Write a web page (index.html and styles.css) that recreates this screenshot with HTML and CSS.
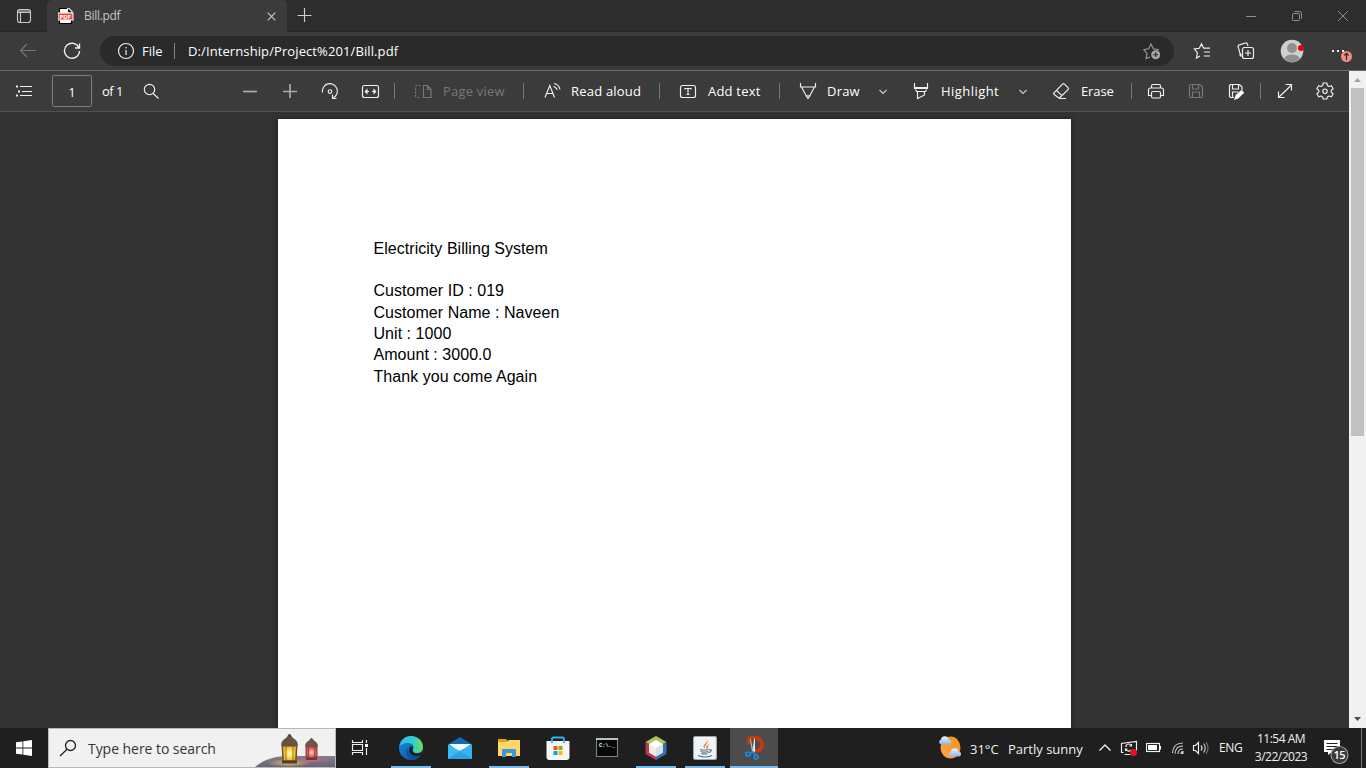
FILE: index.html
```html
<!DOCTYPE html>
<html lang="en">
<head>
<meta charset="utf-8">
<title>Bill.pdf</title>
<link rel="stylesheet" href="styles.css">
</head>
<body>
<div class="titlebar">
  <div class="workspace"><svg class="ic16 grey" viewBox="0 0 16 16"><rect x="1.5" y="1.5" width="13" height="13" rx="2.5"/><path d="M1.5 3h13M1.5 4.5h13M4.5 5v9"/></svg></div>
  <div class="tab">
    <svg class="pdf-icon" viewBox="0 0 16 16"><path d="M1.500.5h8.500l3.500 3.500v11.500h-12z" fill="#fff" stroke="#000"/><path d="M9.500 0h1l3.500 3.500v1.500h-4.500z" fill="#000"/><rect y="5" width="15" height="7" fill="#f44343"/><text x="1.500" y="10.600" textLength="11.500" lengthAdjust="spacingAndGlyphs">PDF</text></svg>
    <span class="tab-title">Bill.pdf</span>
    <svg class="tab-close" viewBox="0 0 9 9"><path d="M.7.7l7.6 7.6M8.3.7L.7 8.3"/></svg>
  </div>
  <svg class="newtab" viewBox="0 0 16 16"><path d="M7.500 1v14M.5 8.500h14"/></svg>
  <div class="window-controls">
    <span><svg class="ic12" viewBox="0 0 12 12"><path d="M1 6.500h10"/></svg></span>
    <span><svg class="ic12" viewBox="0 0 12 12"><rect x="1.500" y="3.500" width="7" height="7" rx="1"/><path d="M3.500 1.500h5a2 2 0 0 1 2 2v5"/></svg></span>
    <span><svg class="ic12" viewBox="0 0 12 12"><path d="M1 1l10 10M11 1L1 11"/></svg></span>
  </div>
</div>

<div class="navbar">
  <div class="nav-cell dim"><svg class="ic18" viewBox="0 0 18 18"><path d="M17 8.500H1.500M8 2L1.500 8.500 8 15"/></svg></div>
  <div class="nav-cell"><svg class="ic18 bold" viewBox="0 0 18 18"><path d="M16 6A7.500 7.500 0 1 0 16.500 9M16.500 1.500V6h-4.500"/></svg></div>
  <div class="address">
    <svg class="ic18" viewBox="0 0 18 18"><circle cx="9" cy="9" r="7.500"/><path d="M9 8v5M9 5v1.400"/></svg>
    <span class="scheme">File</span>
    <i class="rule"></i>
    <span class="url">D:/Internship/Project%201/Bill.pdf</span>
    <svg class="star" viewBox="0 0 18 18"><path d="M7 15L3 16.500l1-5.200L.8 7.600l4.900-.8L8 2l2.300 4.800 4.900.8-1 1"/><circle cx="12.700" cy="12.700" r="4.500" class="plus-dot"/><path class="plus-mark" d="M12.700 10.300v4.800M10.300 12.700h4.800"/></svg>
  </div>
  <svg class="fav" viewBox="0 0 18 18"><path d="M6.800 14L3.500 16l.9-5.400L1.300 7l5-.8L8.500 1.800l2.100 4.300h6.400M11 10h6M11 14h6"/></svg>
  <svg class="collect" viewBox="0 0 18 18"><path d="M4.500 13L3 11.500 1.200 5c-.3-1 .1-1.800 1.100-2.100L8.500 1c1-.3 1.700.2 2 1.100L11 4M2.500 12.500l2 2"/><rect x="5.500" y="5.500" width="11" height="11" rx="2"/><path d="M11 8v6M8 11h6"/></svg>
  <svg class="avatar" viewBox="0 0 24 24"><circle cx="12" cy="12" r="11.300" fill="#d2d0ce"/><circle cx="12" cy="9" r="5" fill="#929090"/><path d="M4 20c1-6 15-6 16 0a11 11 0 0 1-16 0z" fill="#929090"/><circle cx="21" cy="9" r="3" fill="#e60000"/></svg>
  <svg class="more" viewBox="0 0 24 24"><path d="M3 11h2v2H3zM8 11h2v2H8zM13 11h2v2h-2z" fill="#eee" stroke="none"/><circle cx="17.500" cy="17.500" r="5.500" fill="#f28b82" stroke="none"/><path d="M17.500 21v-6.500M15.300 16.500l2.200-2.200 2.200 2.200" stroke="#282828"/></svg>
</div>

<div class="viewer">
  <main class="viewport">
    <div class="toolbar">
      <svg viewBox="0 0 24 24"><path d="M8 7.500h12M10 12.500h10M8 16.500h12"/><path d="M4 7.500h2M6 12.500h2M4 16.500h2" stroke-width="2"/></svg>
      <span class="page-no">1</span>
      <span class="of">of 1</span>
      <svg viewBox="0 0 24 24"><circle cx="10.500" cy="10.500" r="5.200"/><path d="M14.200 14.500l5.300 5"/></svg>
      <i></i>
      <svg class="thick" viewBox="0 0 24 24"><path d="M5 12.500h14"/></svg><i></i>
      <svg class="thick" viewBox="0 0 24 24"><path d="M5 12.500h14M12 5v14"/></svg><i></i>
      <svg viewBox="0 0 24 24"><path d="M4.500 13.500a7.500 7.500 0 1 1 10.800 5.300M14.500 15.500v4h4"/><circle cx="12" cy="12.500" r="1.800"/></svg><i></i>
      <svg viewBox="0 0 24 24"><rect x="4.500" y="6.500" width="16" height="12" rx="2"/><path d="M7 12.500h4M14 12.500h4"/><path d="M6.500 12.500l3-3v6zM18.500 12.500l-3-3v6z" fill="#fff" stroke="none"/></svg><i></i>
      <b></b><i></i>
      <svg class="off" viewBox="0 0 24 24"><path stroke-dasharray="2 1.300" d="M9.500 6.500H6.500a2 2 0 0 0-2 2v8a2 2 0 0 0 2 2h3"/><path d="M12.500 6.500h4l3.500 4v8h-7.500zM16.500 6.500v4h4"/></svg><i></i>
      <span class="off-text">Page view</span>
      <b></b><i></i>
      <svg viewBox="0 0 24 24"><path d="M5 18.500L9.800 6.500l4.700 12M6.500 14.500h6.500M14 4.500q5 1 6 6M13.500 7.500q3 .8 3.500 3.500"/></svg><i></i>
      <span>Read aloud</span>
      <b></b><i></i>
      <svg viewBox="0 0 24 24"><rect x="4.500" y="6.500" width="15" height="12" rx="2"/><path d="M9 10.500V9.500h6v1M12 9.500v6M10.500 15.500h3"/></svg><i></i>
      <span>Add text</span>
      <b></b><i></i>
      <svg viewBox="0 0 24 24"><path d="M4.500 4v4h15V4M5.800 8.500l4.700 9 1.500 2 1.500-2 4.700-9M10 16.800h4"/></svg><i></i>
      <span>Draw</span>
      <svg class="chev" viewBox="0 0 16 16"><path d="M4.500 7L8 10.500 11.500 7"/></svg><i></i>
      <svg viewBox="0 0 24 24"><path d="M5.500 4v5.500h13V4M5.500 8.500h13M6.500 10.500l1 2h9l1-2M8.500 13v6.500l7-3.500v-3"/></svg><i></i>
      <span class="highlight">Highlight</span>
      <svg class="chev" viewBox="0 0 16 16"><path d="M4.500 7L8 10.500 11.500 7"/></svg><i></i>
      <svg viewBox="0 0 24 24"><path d="M5 13.800l8.500-8.700q1-1 2 0l3.500 3.500q1 1 0 2L11.500 18q-1.500 1.500-3 0L5 15.300q-.8-.8 0-1.500zM7.500 11.500l5.700 5.300M10 19.500h7"/></svg><i></i>
      <span class="erase">Erase</span>
      <b></b><i></i>
      <svg viewBox="0 0 24 24"><path d="M7.500 9V7q0-1.500 1.500-1.500h6q1.500 0 1.500 1.500v2M7.500 16.500h-3V11q0-2 2-2h11q2 0 2 2v5.500h-3"/><rect x="7.500" y="12.500" width="9" height="6.500" rx="1.500"/></svg><i></i>
      <svg class="off" viewBox="0 0 24 24"><path d="M5.500 7q0-1.500 1.500-1.500h9l2.500 2.500v9q0 1.500-1.500 1.500H7q-1.500 0-1.500-1.500zM8.500 6v4h6V6M8.500 18v-5h7v5"/></svg><i></i>
      <svg viewBox="0 0 24 24"><path d="M10 18.500H6.500l-1-1v-11l1-1h9l2.500 2.500v3M8.500 6v4h6V6M8.500 18v-5h6"/><path d="M11 20l1-3.500 5.500-5 2 2.200-5.500 5.300z" fill="#fff"/></svg><i></i>
      <b></b><i></i>
      <svg viewBox="0 0 24 24"><path d="M5.500 18.500L18.500 6M12.500 5.500h6v6M5.500 12.500v6h6"/></svg><i></i>
      <svg viewBox="0 0 24 24"><path d="M10.200 4h3.600l.6 2.600 1.500.9 2.500-.8 1.700 3-1.900 1.700v1.700l1.900 1.700-1.700 3-2.500-.8-1.500.9-.6 2.100h-3.600l-.6-2.100-1.500-.9-2.500.8-1.700-3 1.900-1.700v-1.700L3.900 9.700l1.700-3 2.500.8 1.500-.9z" stroke-linejoin="round"/><circle cx="12" cy="12.200" r="2.200"/></svg>
    </div>
    <div class="canvas">
      <article class="sheet">
        <p>Electricity Billing System</p>
        <p></p>
        <p>Customer ID : 019</p>
        <p>Customer Name : Naveen</p>
        <p>Unit : 1000</p>
        <p>Amount : 3000.0</p>
        <p>Thank you come Again</p>
      </article>
    </div>
  </main>
  <aside class="scrollbar">
    <svg viewBox="0 0 17 17"><path d="M5 11h7L8.500 7z" fill="#a3a3a3"/></svg>
    <div class="thumb"></div>
    <svg class="down" viewBox="0 0 17 17"><path d="M5 6h7l-3.500 4z" fill="#505050"/></svg>
  </aside>
</div>

<footer class="taskbar">
  <div class="start"><svg viewBox="0 0 16 16"><path d="M0 2.300L6.500 1.400v6.100H0zM7.300 1.300L16 0v7.500H7.300zM0 8.400h6.500v6.200L0 13.700zM7.300 8.400H16V16l-8.700-1.300z"/></svg></div>
  <div class="search">
    <svg class="magnifier" viewBox="0 0 18 18"><circle cx="11.500" cy="6.500" r="5"/><path d="M8 10.300L1 17"/></svg>
    <span>Type here to search</span>
    <svg class="lanterns" viewBox="0 0 80 38">
      <defs><radialGradient id="gold"><stop offset="0" stop-color="#fffbd8"/><stop offset=".5" stop-color="#ffe45c"/><stop offset="1" stop-color="#eeb022"/></radialGradient><radialGradient id="rose"><stop offset="0" stop-color="#ffe8b8"/><stop offset=".5" stop-color="#f58474"/><stop offset="1" stop-color="#c84850"/></radialGradient><linearGradient id="hill" x2="0" y2="1"><stop offset="0" stop-color="#858091"/><stop offset="1" stop-color="#686376"/></linearGradient>
      <radialGradient id="goldglow"><stop offset="0" stop-color="#e5c35b"/><stop offset="1" stop-color="#e5c35b" stop-opacity="0"/></radialGradient><radialGradient id="redglow"><stop offset="0" stop-color="#e56070"/><stop offset="1" stop-color="#e56070" stop-opacity="0"/></radialGradient></defs>
      <path d="M0 38C12 28 26 26 45 27h35v11z" fill="url(#hill)"/><ellipse cx="34" cy="34" rx="22" ry="4" fill="url(#goldglow)"/><ellipse cx="56" cy="31" rx="17" ry="3" fill="url(#redglow)"/>
      <path d="M26.500 16h16l-1 17h-14z" fill="#6b4d28"/><path d="M28 17.500h13l-.8 14H28.800z" fill="url(#gold)"/><path d="M31 17v15M38 17v15" stroke="#8a6426" stroke-width=".8"/><path d="M26 16.500q0-5 5-7.500l2-2.500h3l2 2.500q5 2.500 5 7.500z" fill="#655347"/><circle cx="34.500" cy="6.500" r="1.600" fill="#57483f"/><path d="M27 31.500h15v3H27z" fill="#4d3d35"/>
      <path d="M50.500 17h12v12h-12z" fill="#7e4744"/><path d="M51.500 18h10v11h-10z" fill="url(#rose)"/><path d="M53.500 18v11M59.500 18v11" stroke="#934145" stroke-width=".8"/><path d="M50 17.500q0-4 4-6l2-2.500h1l2 2.500q4 2 4 6z" fill="#6a564b"/><path d="M51 28.500h11v2.500H51z" fill="#584044"/>
    </svg>
  </div>
  <div class="taskview"><svg viewBox="0 0 18 18"><path d="M1.500 1v2.500h10V1M1.500 16v-2.500h10V16M1.500 5.500h10v6h-10zM15.500 1v3M15.500 9v7"/><path d="M14 5h3v3h-3z" fill="#fff" stroke="none"/></svg></div>
  <nav class="apps">
    <div class="app run"><svg viewBox="0 0 24 24"><defs><linearGradient id="edgeTop"><stop offset="0" stop-color="#36b9ee"/><stop offset=".55" stop-color="#2dcdd3"/><stop offset="1" stop-color="#72dc52"/></linearGradient><linearGradient id="edgeBlue" x2="1" y2="1"><stop offset="0" stop-color="#178fdd"/><stop offset="1" stop-color="#094c9b"/></linearGradient></defs><circle cx="12" cy="12" r="12" fill="url(#edgeBlue)"/><path d="M.5 10C2 3 7 0 12 0c7 0 12 5 12 11 0 4-3 6-6 6-4 0-5-2-4-4 2-3-1-6-5-6C5 7 2 8.500.5 10z" fill="url(#edgeTop)"/><path d="M9.500 11c-2 5 1 9 6 9 3 0 5-1 7-2-1 3-4 5-8 6-7-1-9-9-5-13z" fill="#104f9d"/><path d="M13.500 10.500c2 1-1 2 .5 5 2 3 6 2 9 .5l-1 3c-6 3-12 0-12-5 0-2 1-4 3.500-3.500z" fill="#202020"/></svg></div>
    <div class="app"><svg viewBox="0 0 24 24"><path d="M0 8.500L12 1l12 7.500V12H0z" fill="#1268b7"/><path d="M1 8h22L12 17z" fill="#f4f8fc"/><path d="M0 8.500L12 15l12-6.500V23H0z" fill="#3cbcf2"/><path d="M0 23l12-8 12-6.500V23z" fill="#2aa1e4"/><path d="M12 15l12 8V8.500z" fill="#37b3ee"/></svg></div>
    <div class="app run"><svg viewBox="0 0 24 24"><path d="M1 3h8l2 2v3H1z" fill="#e5a313"/><path d="M1 6h9l2-2h11v16H1z" fill="#ffd768"/><path d="M5 14q0-1 1-1h12q1 0 1 1v7h-4v-4H9v4H5z" fill="#3e96dc"/></svg></div>
    <div class="app"><svg viewBox="0 0 24 24"><path d="M.5 5h23v16q0 3-3 3h-17q-3 0-3-3z" fill="#f5f5f5"/><path d="M6 7V3q0-1.500 1.500-1.500h9q1.500 0 1.500 1.500v4" fill="none" stroke="#2bb7ef" stroke-width="1.800"/><path d="M7.500 10h4v4h-4z" fill="#f25022"/><path d="M12.500 10h4v4h-4z" fill="#7fba00"/><path d="M7.500 15h4v4h-4z" fill="#00a4ef"/><path d="M12.500 15h4v4h-4z" fill="#ffb900"/></svg></div>
    <div class="app"><svg viewBox="0 0 24 24"><path d="M1.500 2.500h21v18h-21z" fill="#080808" stroke="#77838a"/><path d="M1 2h22v2H1z" fill="#b9c0c6"/><text x="4" y="11" class="cmd" textLength="16" lengthAdjust="spacingAndGlyphs">C:\._</text></svg></div>
    <div class="app run"><svg viewBox="0 0 24 24"><path d="M12 0l10.500 6-10.500 6L1.500 6z" fill="#adc952"/><path d="M1.500 6L12 12v12L1.500 18z" fill="#be3654"/><path d="M22.500 6L12 12v12l10.500-6z" fill="#376eb5"/><path d="M12 4l7 4v8.500l-7 4-7-4V8z" fill="#fff"/><path d="M5 8l7 4v8.500l-7-4z" fill="#e9eee8"/><path d="M19 8l-7 4v8.500l7-4z" fill="#d7e1e5"/></svg></div>
    <div class="app run"><svg viewBox="0 0 24 24"><rect x=".5" y=".5" width="23" height="23" rx="2" fill="#f1f3f4" stroke="#9da7ad"/><path d="M12 13c-5-5 5-5 1-10 5 4-3 6-1 10zM14 13c-2-3 1-4 3-5-4 3 0 3-3 5z" fill="#e87b30"/><path d="M7 13.500q4 1.500 8.500 0M7.500 15.500q3.500 1.500 7.500 0M8.500 17.500q3 1 6 0M16 14q3-1 2 1t-3 1M5 19.500q7 3 14 0" fill="none" stroke="#55748b" stroke-width="1.200"/></svg></div>
    <div class="app run active"><svg viewBox="0 0 24 24"><path d="M7 8C3 1 14-1 18 4c4 4 2 11-5 11" fill="none" stroke="#c83808" stroke-width="3.800"/><path d="M8.500 1l3 15h-1.500L8 5z" fill="#aeb4b8"/><path d="M13 2v14h-2.500L12 3z" fill="#e4e7e9"/><ellipse cx="6" cy="18" rx="2.300" ry="1.900" fill="none" stroke="#1688dc" stroke-width="1.900"/><ellipse cx="14" cy="21" rx="1.900" ry="2" fill="none" stroke="#1688dc" stroke-width="1.900"/><path d="M8 17.500l3-1.500 2.500 3" fill="none" stroke="#1688dc" stroke-width="1.900"/></svg></div>
  </nav>
  <div class="tray">
    <svg class="weather" viewBox="0 0 26 26"><defs><linearGradient id="sun" x1="1" x2="0" y2="1"><stop offset="0" stop-color="#f0921c"/><stop offset="1" stop-color="#ffa64a"/></linearGradient><linearGradient id="cloud" x2="0" y2="1"><stop offset="0" stop-color="#eef5ff"/><stop offset="1" stop-color="#8db4ed"/></linearGradient></defs><ellipse cx="12.500" cy="12.500" rx="10" ry="11" fill="url(#sun)"/><path d="M3 9.500a2.600 2.600 0 0 1 0-5 3.800 3.800 0 0 1 7.500 0 2.600 2.600 0 0 1 1 5z" fill="url(#cloud)"/><path d="M13 21.500a2.600 2.600 0 0 1 0-5 3.800 3.800 0 0 1 7.500 0 2.600 2.600 0 0 1 1 5z" fill="url(#cloud)"/></svg>
    <span class="temp">31°C</span>
    <span class="forecast">Partly sunny</span>
    <svg class="caret" viewBox="0 0 14 14"><path d="M1.500 9.500L7 4l5.500 5.500"/></svg>
    <svg class="sync" viewBox="0 0 18 18"><path d="M3.500 13.500h-2v-9l15-2v9M4.500 15.500h6M6 8V6.500q3-3 5.500 0M11.500 5v2H9.500M5.500 12v-2h2M6 10.500q2 3 5 .5"/><circle cx="13.500" cy="13.500" r="3.500" fill="#e81123" stroke="none"/></svg>
    <svg class="battery" viewBox="0 0 16 12"><rect x=".5" y="1.500" width="13" height="8"/><path d="M2 3h9v5H2zM13.500 4H15v3.500h-1.500z" fill="#fff" stroke="none"/></svg>
    <svg class="wifi" viewBox="0 0 14 14"><path d="M1.500 12Q2 2 12 2M4 12.800Q4.500 5 12 5M7 13q0-5 5-5"/><path d="M10 12.500q0-2 2-2v2z" fill="#fff"/></svg>
    <svg class="volume" viewBox="0 0 18 16"><path d="M1.500 5.500h2l3-3v11l-3-3h-2zM9 5.500q2 2.500 0 5"/><path d="M11.500 3.500q3.500 4.500 0 9" opacity=".8"/><path d="M14 2q4 6 0 12" opacity=".4"/></svg>
    <span class="lang">ENG</span>
    <div class="clock"><span>11:54 AM</span><span>3/22/2023</span></div>
    <svg class="notify" viewBox="0 0 28 28"><path d="M1 3h16v12H9l-4 3v-3H1z" fill="#fff"/><path d="M3.500 6.500h11M3.500 9.500h11M3.500 12.500h7" stroke="#202020"/><circle cx="16.500" cy="18" r="8.500" fill="#3a3a3a" stroke="#999"/><text x="16.300" y="22" text-anchor="middle">15</text></svg>
    <i class="desktop-edge"></i>
  </div>
</footer>
</body>
</html>
```

FILE: styles.css
```css
* { box-sizing: border-box; }
body {
  margin: 0;
  width: 1366px;
  height: 768px;
  overflow: hidden;
  display: grid;
  grid-template-rows: 32px 39px 657px 40px;
  font: 13px/18px "Open Sans", "Noto Sans", sans-serif;
  color: #fff;
  background: #333;
}
svg { fill: none; stroke: #f0f0f0; stroke-width: 1.15; display: block; flex: none; }
i, b { display: block; }
span { white-space: nowrap; }

.titlebar { display: flex; background: #2d2d2d; box-shadow: inset 0 -1px #272727; }
.workspace { width: 47px; display: flex; align-items: center; justify-content: center; }
.ic16 { width: 16px; height: 16px; }
.grey { stroke: #c8c8c8; }
.tab { width: 240px; display: flex; align-items: center; background: #3b3b3b; border-radius: 5px 5px 0 0; padding: 0 11px; }
.pdf-icon { width: 16px; height: 16px; }
.pdf-icon text { font: bold 5.5px "DejaVu Sans", sans-serif; fill: #fff; stroke: none; }
.tab-title { width: 183px; margin-left: 10px; flex: none; font-size: 12px; letter-spacing: -.3px; color: #c4c4c4; }
.tab-close { width: 9px; height: 9px; stroke: #c8c8c8; }
.newtab { width: 16px; height: 16px; margin: 7px 0 0 10px; stroke: #d0d0d0; }
.window-controls { display: flex; margin-left: auto; }
.window-controls span { width: 46px; display: flex; align-items: center; justify-content: center; }
.ic12 { width: 12px; height: 12px; stroke: #909090; stroke-width: 1; }

.navbar { display: flex; align-items: center; background: #3b3b3b; border-bottom: 1px solid #6a6a6a; padding-left: 6px; }
.nav-cell { width: 44px; display: flex; justify-content: center; }
.ic18 { width: 18px; height: 18px; }
.dim svg { stroke: #777; }
.bold { stroke-width: 1.4; }
.address { width: 1074px; height: 30px; margin-left: 6px; padding-left: 17px; border-radius: 15px; background: #2a2a2a; display: flex; align-items: center; }
.scheme { width: 32px; margin-left: 7px; }
.rule { width: 1px; height: 16px; background: #858585; }
.url { margin-left: 13px; letter-spacing: .1px; }
.star { width: 18px; height: 18px; margin: 0 13px 0 auto; stroke: #9a9a9a; }
.plus-dot { fill: #a6a6a6; stroke: none; }
.plus-mark { stroke: #2a2a2a; }
.fav { width: 18px; height: 18px; margin-left: 19px; }
.collect { width: 18px; height: 18px; margin-left: 26px; }
.avatar { width: 24px; height: 24px; margin-left: 25px; stroke: none; }
.more { width: 24px; height: 24px; margin-left: 25px; }

.viewer { display: grid; grid-template-columns: 1349px 17px; }
.viewport { display: grid; grid-template-rows: 41px 616px; }
.toolbar {
  background: #3b3b3b;
  border-bottom: 1px solid #505050;
  padding-left: 12px;
  display: grid;
  align-items: center;
  letter-spacing: .2px;
  grid-template-columns:
    24px 56px 47px 24px 75px 24px 16px 24px 16px 24px 16px 24px 12px
    1px 16px 24px 8px 80px
    1px 16px 24px 7px 88px
    1px 16px 24px 8px 71px
    1px 16px 24px 7px 48px 16px 18px
    24px 8px 74px 16px 18px
    24px 8px 50px
    1px 12px 24px 16px 24px 16px 24px 12px
    1px 12px 24px 16px 24px;
}
.toolbar svg { width: 24px; height: 24px; }
.toolbar .chev { width: 16px; height: 16px; stroke: #ccc; }
.toolbar b { width: 1px; height: 16px; background: #777; }
.toolbar .thick { stroke: #aaa; stroke-width: 1.7; }
.toolbar .off { stroke: #777; }
.off-text { color: #777; }
.page-no { justify-self: end; width: 40px; height: 32px; line-height: 32px; border: 1px solid #7d7d7d; border-radius: 2px; text-align: center; }
.of { padding-left: 10px; letter-spacing: -.5px; }
.highlight { letter-spacing: .45px; }
.erase { letter-spacing: -.1px; }

.canvas { padding: 7px 0 0 278px; overflow: hidden; background: #333; }
.sheet { width: 793px; height: 640px; padding: 118.7px 0 0 95.5px; background: #fff; box-shadow: 0 0 5px #1e1e1e; color: #000; font: 16px/21.33px "Liberation Sans", Arial, sans-serif; letter-spacing: .04px; }
.sheet p { margin: 0; height: 21.33px; }

.scrollbar { background: #f1f1f1; display: grid; grid-template-rows: 17px 348px 1fr; }
.scrollbar svg { width: 17px; height: 17px; stroke: none; }
.thumb { width: 13px; height: 348px; margin-left: 2px; background: #c1c1c1; }
.down { align-self: end; }

.taskbar { display: flex; background: #1f1f1f; }
.start { width: 48px; display: flex; align-items: center; justify-content: center; }
.start svg { width: 16px; height: 16px; fill: #fff; stroke: none; }
.search { width: 288px; display: flex; align-items: center; border: 1px solid #b8b8b8; background: #f1f1f1; color: #353535; padding-left: 10px; font-size: 14px; }
.magnifier { width: 18px; height: 18px; stroke: #222; stroke-width: 1.3; }
.search span { margin-left: 11px; padding-top: 2px; letter-spacing: -.05px; }
.lanterns { width: 80px; height: 38px; margin-left: auto; stroke: none; }
.taskview { width: 48px; display: flex; align-items: center; justify-content: center; }
.taskview svg { width: 18px; height: 18px; }
.apps { display: flex; gap: 1px; margin-left: 3px; }
.app { width: 48px; display: flex; align-items: center; justify-content: center; }
.app svg { width: 24px; height: 24px; stroke: none; }
.run { background: linear-gradient(#76b9ed, #76b9ed) center bottom / 40px 2px no-repeat; }
.active { background-color: #4c4c4c; background-size: 48px 2px; }
.cmd { font: bold 6px "Liberation Mono", monospace; fill: #fff; }
.tray { display: flex; align-items: center; margin-left: 160px; color: #f0f0f0; }
.weather { width: 26px; height: 26px; stroke: none; }
.temp { width: 38px; margin-left: 6px; padding-top: 2px; }
.forecast { width: 90px; padding-top: 2px; }
.caret { width: 14px; height: 14px; stroke-width: 1.4; }
.sync { width: 18px; height: 18px; margin-left: 8px; }
.battery { width: 16px; height: 12px; margin-left: 8px; }
.wifi { width: 14px; height: 14px; margin-left: 9px; stroke: #ccc; }
.volume { width: 18px; height: 16px; margin-left: 7px; }
.lang { width: 30px; margin-left: 9px; font-size: 12px; letter-spacing: -.3px; }
.clock { width: 62px; margin-left: 1px; display: grid; font-size: 12px; letter-spacing: -.5px; text-align: center; }
.notify { width: 28px; height: 28px; margin: 6px 0 0 11px; stroke: none; }
.notify text { font: 600 11px "Open Sans", sans-serif; letter-spacing: -.5px; fill: #fff; }
.desktop-edge { width: 1px; height: 40px; margin-left: 10px; background: #777; }
```
